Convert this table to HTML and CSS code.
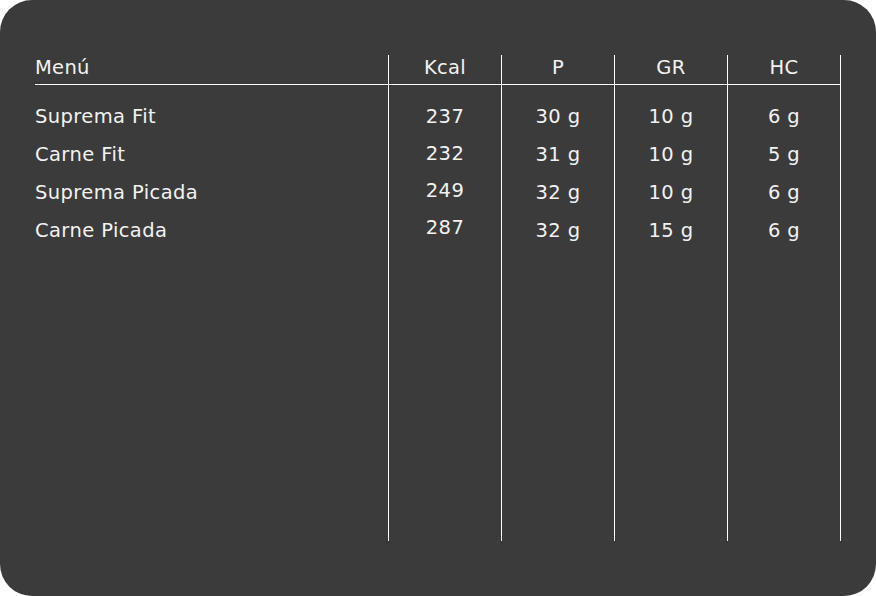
FILE: index.html
```html
<!DOCTYPE html>
<html lang="es">
<head>
<meta charset="utf-8">
<link rel="stylesheet" href="styles.css">
<title>Menú</title>
</head>
<body>
<div class="card">
  <div class="table">
    <div class="col col-name">
      <div class="head">Menú</div>
      <div class="cells">
        <div class="cell">Suprema Fit</div>
        <div class="cell">Carne Fit</div>
        <div class="cell">Suprema Picada</div>
        <div class="cell">Carne Picada</div>
      </div>
    </div>
    <div class="col col-num kcal">
      <div class="head">Kcal</div>
      <div class="cells">
        <div class="cell">237</div>
        <div class="cell">232</div>
        <div class="cell">249</div>
        <div class="cell">287</div>
      </div>
    </div>
    <div class="col col-num">
      <div class="head">P</div>
      <div class="cells">
        <div class="cell">30 g</div>
        <div class="cell">31 g</div>
        <div class="cell">32 g</div>
        <div class="cell">32 g</div>
      </div>
    </div>
    <div class="col col-num">
      <div class="head">GR</div>
      <div class="cells">
        <div class="cell">10 g</div>
        <div class="cell">10 g</div>
        <div class="cell">10 g</div>
        <div class="cell">15 g</div>
      </div>
    </div>
    <div class="col col-num last">
      <div class="head">HC</div>
      <div class="cells">
        <div class="cell">6 g</div>
        <div class="cell">5 g</div>
        <div class="cell">6 g</div>
        <div class="cell">6 g</div>
      </div>
    </div>
  </div>
</div>
</body>
</html>
```
FILE: styles.css
```css
html, body {
  margin: 0;
  padding: 0;
  background: #ffffff;
}
body {
  font-family: "DejaVu Sans", "Noto Sans", sans-serif;
  color: #f2f2f2;
}
.card {
  width: 876px;
  height: 596px;
  box-sizing: border-box;
  background: #3b3b3b;
  border-radius: 32px;
  padding: 55px 0 0 35px;
}
.table {
  display: flex;
  height: 486px;
}
.col {
  display: flex;
  flex-direction: column;
}
.col-name {
  width: 353px;
}
.col-num {
  width: 112px;
  border-left: 1px solid #ffffff;
  text-align: center;
}
.col-num.last {
  border-right: 1px solid #ffffff;
}
.head {
  height: 30px;
  box-sizing: border-box;
  border-bottom: 1px solid #ffffff;
  font-size: 19.5px;
  line-height: 26px;
  letter-spacing: 0.3px;
}
.cells {
  padding-top: 13px;
}
.cell {
  height: 38px;
  font-size: 19.5px;
  line-height: 38px;
  letter-spacing: 0.4px;
}
.kcal .cell {
  height: 37px;
  line-height: 37px;
}
```
